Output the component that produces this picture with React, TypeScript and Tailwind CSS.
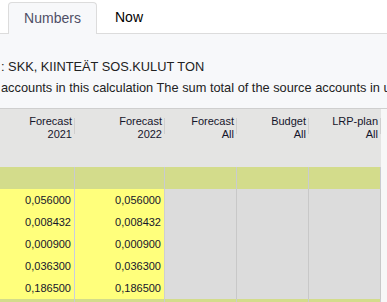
import React from "react";

const rows = ["0,056000", "0,008432", "0,000900", "0,036300", "0,186500"];

function HeaderCell({ w, l1, l2 }: { w: string; l1: string; l2: string }) {
  return (
    <div className={`${w} h-full flex justify-end pr-[3px] pt-[6px] relative shrink-0`}>
      <div className="text-right leading-[13px] text-[11px] text-[#15152b]">
        <div>{l1}</div>
        <div>{l2}</div>
      </div>
      <div className="absolute right-0 top-[9px] h-[16px] w-px bg-[#cfcfcf]" />
    </div>
  );
}

function GreenRow() {
  return (
    <div className="h-[22px] bg-[#d3dc8b] flex">
      <div className="w-[75px] h-full border-r border-[#c9cbd0]" />
      <div className="w-[90px] h-full border-r border-[#c9cbd0]" />
      <div className="w-[72px] h-full border-r border-[#c9cbd0]" />
      <div className="w-[72px] h-full border-r border-[#c9cbd0]" />
      <div className="w-[72px] h-full border-r border-[#c9cbd0]" />
    </div>
  );
}

export default function App() {
  return (
    <div
      className="w-[387px] h-[302px] overflow-hidden bg-white"
      style={{ fontFamily: '"Liberation Sans", Arial, sans-serif' }}
    >
      {/* Tabs */}
      <div className="h-[34px] border-b border-[#dcdcdc] flex items-end pl-[8px]">
        <div className="h-[32px] w-[89px] -mb-px border border-b-0 border-[#dcdcdc] rounded-t-[4px] bg-[#f7f8fa] flex items-center justify-center text-[14px] text-[#4f4f66]">
          Numbers
        </div>
        <div className="h-[32px] flex items-center pl-[18px] text-[14px] text-black">Now</div>
      </div>

      {/* Panel */}
      <div className="h-[75px] bg-[#f7f8fa] border-b border-[#cfcfcf] pt-[24px] pl-[1px] whitespace-nowrap overflow-hidden text-[#222]">
        <div className="text-[12.8px] leading-[17px]">: SKK, KIINTEÄT SOS.KULUT TON</div>
        <div className="text-[12.8px] leading-[17px] mt-[4px]">
          accounts in this calculation The sum total of the source accounts in use
        </div>
      </div>

      {/* Table */}
      <div className="flex">
        <div className="w-[381px] shrink-0">
          <div className="h-[58px] bg-[#e4e4e3] flex">
            <HeaderCell w="w-[75px]" l1="Forecast" l2="2021" />
            <HeaderCell w="w-[90px]" l1="Forecast" l2="2022" />
            <HeaderCell w="w-[72px]" l1="Forecast" l2="All" />
            <HeaderCell w="w-[72px]" l1="Budget" l2="All" />
            <HeaderCell w="w-[72px]" l1="LRP-plan" l2="All" />
          </div>
          <GreenRow />
          {rows.map((v) => (
            <div key={v} className="h-[22px] flex text-[11px] text-[#15152b]">
              <div className="w-[75px] h-full bg-[#ffff7c] border-r border-[#c9cde0] flex items-center justify-end pr-[3px]">
                {v}
              </div>
              <div className="w-[90px] h-full bg-[#ffff7c] border-r border-[#cfcfcf] flex items-center justify-end pr-[3px]">
                {v}
              </div>
              <div className="w-[72px] h-full bg-[#dcdcdc] border-r border-[#c8c8c8]" />
              <div className="w-[72px] h-full bg-[#dcdcdc] border-r border-[#c8c8c8]" />
              <div className="w-[72px] h-full bg-[#dcdcdc] border-r border-[#c8c8c8]" />
            </div>
          ))}
          <GreenRow />
        </div>
        <div className="flex-1 bg-[#f7f7f7]" />
      </div>
    </div>
  );
}
